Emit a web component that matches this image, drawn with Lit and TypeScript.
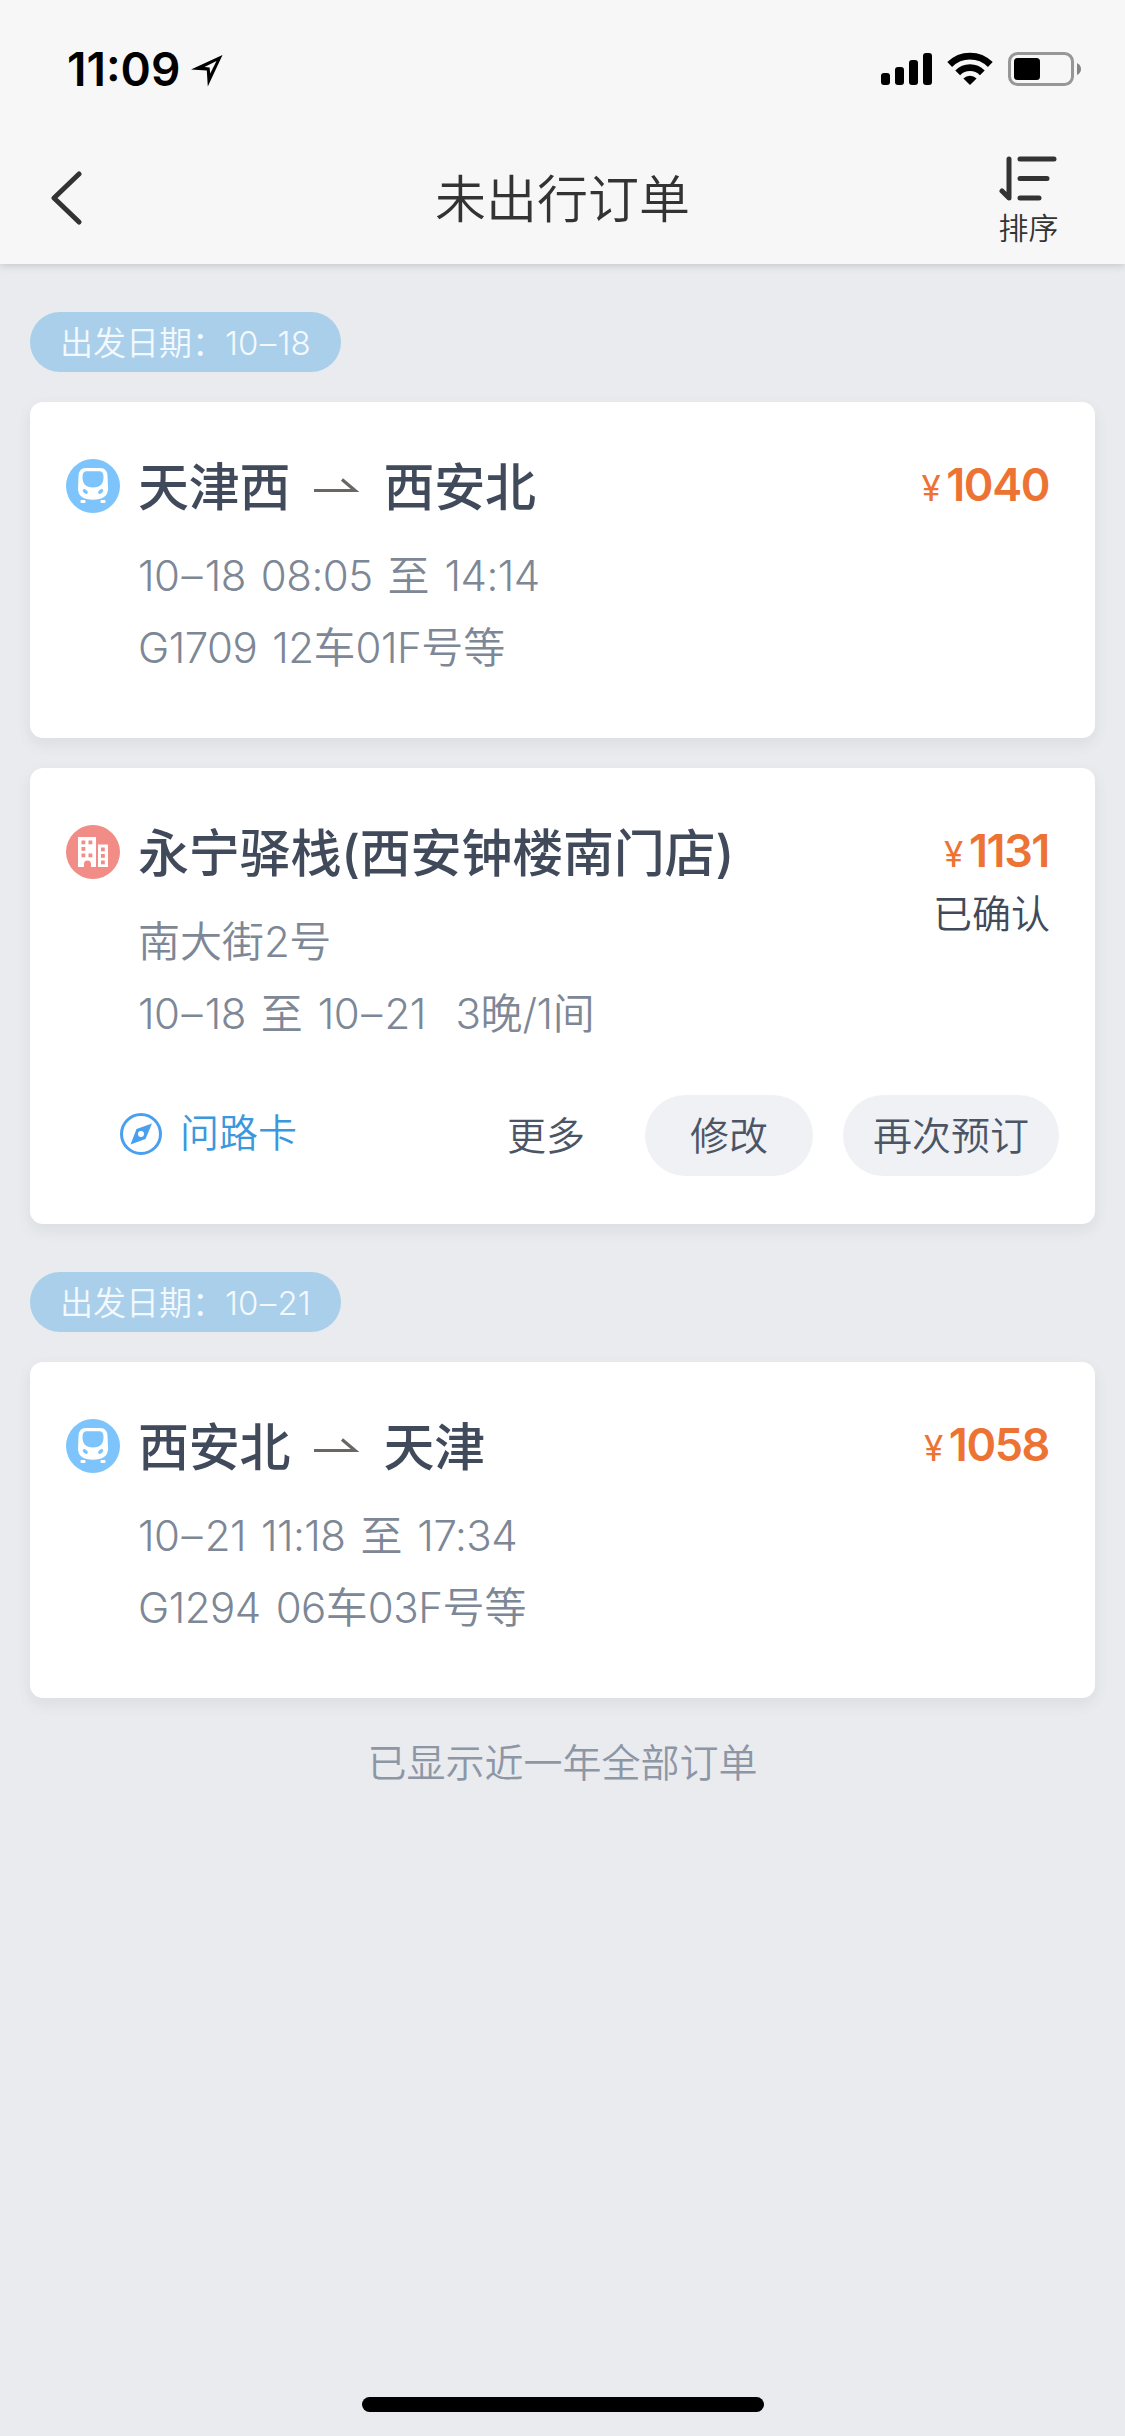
import { LitElement, html, css, svg, nothing } from "lit";
import { customElement, property } from "lit/decorators.js";

interface Order {
  kind: "train" | "hotel";
  title: string;
  to?: string;
  price: string;
  status?: string;
  lines: string[];
  actions?: boolean;
}

const GROUPS: { date: string; orders: Order[] }[] = [
  {
    date: "10–18",
    orders: [
      { kind: "train", title: "天津西", to: "西安北", price: "1040", lines: ["10–18 08:05 至 14:14", "G1709 12车01F号等"] },
      {
        kind: "hotel",
        title: "永宁驿栈(西安钟楼南门店)",
        price: "1131",
        status: "已确认",
        lines: ["南大街2号", "10–18 至 10–21  3晚/1间"],
        actions: true,
      },
    ],
  },
  {
    date: "10–21",
    orders: [
      { kind: "train", title: "西安北", to: "天津", price: "1058", lines: ["10–21 11:18 至 17:34", "G1294 06车03F号等"] },
    ],
  },
];

const fonts = css`Inter, "Noto Sans CJK SC", sans-serif`;

const trainIcon = svg`
  <circle cx="27" cy="27" r="27" fill="#7cc4fb"/>
  <path fill-rule="evenodd" d="M19.500 9h15q6.500 0 7 8l.5 13q0 5-4 8-4 2.800-11 2.800t-11-2.800q-4-3-4-8l.5-13q.5-8 7-8zM20.500 12.200q-3.600 0-4 5-.4 11.300 10.500 11.300t10.500-11.300q-.4-5-4-5z" fill="#fff"/>
  <ellipse cx="19.300" cy="32.500" rx="2.900" ry="1.900" transform="rotate(35 19.300 32.500)" fill="#7cc4fb"/>
  <ellipse cx="34.700" cy="32.500" rx="2.900" ry="1.900" transform="rotate(-35 34.700 32.500)" fill="#7cc4fb"/>
  <rect x="14.500" y="41" width="5" height="3" rx="1" fill="#fff"/>
  <rect x="34.500" y="41" width="5" height="3" rx="1" fill="#fff"/>`;

const hotelIcon = svg`
  <circle cx="27" cy="27" r="27" fill="#f18c86"/>
  <path d="M12 12h18v30h-5v-3a3.500 3.500 0 0 0-7 0v3h-6z" fill="#fff"/>
  <path d="M32 19.500h10V42H32z" fill="#fff"/>
  <g fill="#f18c86">
    <rect x="15.500" y="15.500" width="3.800" height="3.800"/><rect x="22.500" y="15.500" width="3.800" height="3.800"/>
    <rect x="15.500" y="22" width="3.800" height="3.800"/>
    <rect x="15.500" y="28.500" width="3.800" height="3.800"/><rect x="22.500" y="28.500" width="3.800" height="3.800"/>
    <rect x="35" y="22.500" width="3.800" height="3.800"/><rect x="35" y="29" width="3.800" height="3.800"/><rect x="35" y="35.500" width="3.800" height="3.800"/>
  </g>`;

/** Splits a line into Latin, dash and Chinese runs so that each gets its own tracking. */
const runs = (text: string) =>
  (text.match(/–|[\u3000-\uffff]+|[^–\u3000-\uffff]+/g) ?? []).map(
    (t) => html`<span class=${t === "–" ? "dash" : t.charCodeAt(0) >= 0x3000 ? "han" : "num"}>${t}</span>`
  );

@customElement("status-bar")
export class StatusBar extends LitElement {
  static styles = css`
    :host { display: flex; justify-content: space-between; align-items: center; height: 132px; box-sizing: border-box; padding: 5px 43px 0 67px; font-family: ${fonts}; color: #000; }
    .left { display: flex; align-items: center; gap: 11px; }
    .time { font-size: 46px; line-height: 54px; font-weight: 600; }
    .loc { margin-top: 5px; }
    .right { display: flex; align-items: center; }
    svg { display: block; }
  `;
  render() {
    return html`
      <div class="left">
        <span class="time">11:09</span>
        <svg class="loc" width="32" height="34" viewBox="0 0 32 34"><path fill-rule="evenodd" d="M31.500 1 0 15.500l15.800 1L16.800 32.500zM25.500 7 19.200 19.500 18.600 13.500 13.500 13z"/></svg>
      </div>
      <div class="right">
        <svg width="202" height="36" viewBox="880 51 202 36">
          <rect x="881" y="73" width="9" height="12" rx="3"/>
          <rect x="895" y="67" width="9" height="18" rx="3"/>
          <rect x="909" y="60" width="9" height="25" rx="3"/>
          <rect x="923" y="53" width="9" height="32" rx="3"/>
          <path d="M970 85l-6.600-6.600a9.400 9.400 0 0 1 13.200 0z"/>
          <g fill="none" stroke="#000" stroke-width="6.800">
            <path d="M957.700 72.800a17.400 17.400 0 0 1 24.600 0"/>
            <path d="M949.700 64.500a28.700 28.700 0 0 1 40.600 0"/>
          </g>
          <rect x="1009.500" y="53.500" width="63" height="31" rx="8" fill="none" stroke="#979797" stroke-width="3"/>
          <rect x="1014" y="58" width="26" height="22" rx="3.500"/>
          <path d="M1077 63q4 2 4 6t-4 6z" fill="#858585"/>
        </svg>
      </div>`;
  }
}

@customElement("nav-bar")
export class NavBar extends LitElement {
  static styles = css`
    :host { display: grid; grid-template-columns: 1fr auto 1fr; align-items: center; height: 132px; font-family: ${fonts}; color: #333; }
    svg { display: block; fill: none; stroke: #333; stroke-width: 5; stroke-linecap: round; stroke-linejoin: round; }
    .back { padding-left: 50px; }
    .title { font-size: 51px; line-height: 66px; padding-top: 4px; font-weight: 350; }
    .sort { justify-self: end; display: flex; flex-direction: column; align-items: center; padding-right: 66px; padding-top: 6px; }
    .label { font-size: 30px; line-height: 36px; margin-top: 8px; font-weight: 350; }
  `;
  render() {
    return html`
      <div class="back"><svg width="33" height="54" viewBox="0 0 33 54"><path d="M29 3 4 27l25 24"/></svg></div>
      <div class="title">未出行订单</div>
      <div class="sort">
        <svg width="61" height="46" viewBox="0 0 61 46"><path d="M11 3v39L4 35M22 3h34M22 22.500h27M22 42h19"/></svg>
        <span class="label">排序</span>
      </div>`;
  }
}

@customElement("order-card")
export class OrderCard extends LitElement {
  @property({ attribute: false }) order!: Order;
  static styles = css`
    :host { display: block; box-sizing: border-box; min-height: 336px; background: #fff; border-radius: 13px; box-shadow: 0 6px 14px rgba(90, 105, 120, 0.1); padding: 48px 45px 48px 36px; font-family: ${fonts}; }
    svg { display: block; flex: none; }
    .top { display: flex; align-items: flex-start; }
    .icon { margin-top: 9px; }
    .body { flex: 1; padding: 2px 0 0 18px; }
    .title { display: flex; align-items: center; height: 72px; font-size: 51px; line-height: 72px; font-weight: 500; letter-spacing: -0.2px; color: #414a5a; white-space: nowrap; }
    .arrow { margin: 0 23px 8px 22px; }
    .line { height: 72px; line-height: 72px; font-size: 42px; color: #7d8796; white-space: pre; font-weight: 350; word-spacing: 3.6px; }
    .lines { padding-top: 16px; }
    .num { letter-spacing: -0.5px; }
    .dash { margin: 0 0.05em; }
    .side { display: flex; flex-direction: column; align-items: flex-end; }
    .price { display: flex; align-items: baseline; height: 71px; line-height: 70px; color: #ed7334; font-size: 45px; font-weight: 600; letter-spacing: -1.4px; padding-right: 1px; }
    .yen { font-size: 35px; font-weight: 400; margin-right: 7px; }
    .status { font-size: 39px; line-height: 48px; color: #414a5a; font-weight: 350; margin-top: 3px; }
    .actions { display: flex; align-items: center; height: 81px; margin-top: 45px; padding-left: 54px; margin-right: -9px; font-size: 39px; line-height: 81px; font-weight: 350; color: #4c5565; }
    .guide { display: flex; align-items: center; gap: 18px; color: #3b98dd; margin: -4px auto 0 0; }
    .guide-text { margin-top: -3px; }
    .more { margin-right: 60px; }
    .btn { height: 81px; border-radius: 41px; background: #eff1f5; text-align: center; width: 168px; }
    .wide { width: 216px; margin-left: 30px; }
  `;
  render() {
    const o = this.order;
    return html`
      <div class="top">
        <svg class="icon" width="54" height="54" viewBox="0 0 54 54">${o.kind === "train" ? trainIcon : hotelIcon}</svg>
        <div class="body">
          <div class="title">
            <span>${o.title}</span>
            ${o.to
              ? html`<svg class="arrow" width="48" height="18" viewBox="0 0 48 18"><path d="M2 15.500h41L30 4.500" fill="none" stroke="#6b6662" stroke-width="3.200"/></svg><span>${o.to}</span>`
              : nothing}
          </div>
          <div class="lines">${o.lines.map((l) => html`<div class="line">${runs(l)}</div>`)}</div>
        </div>
        <div class="side">
          <div class="price"><span class="yen">¥</span>${o.price}</div>
          ${o.status ? html`<div class="status">${o.status}</div>` : nothing}
        </div>
      </div>
      ${o.actions
        ? html`<div class="actions">
            <div class="guide">
              <svg width="42" height="42" viewBox="0 0 42 42">
                <circle cx="21" cy="21" r="19.500" fill="none" stroke="#4a9fee" stroke-width="3"/>
                <path fill="#4a9fee" fill-rule="evenodd" d="M32 10.500 25.500 26 10.500 31.500 16.500 16zM21 18a3 3 0 1 0 0 6 3 3 0 0 0 0-6z"/>
              </svg>
              <span class="guide-text">问路卡</span>
            </div>
            <span class="more">更多</span>
            <div class="btn">修改</div>
            <div class="btn wide">再次预订</div>
          </div>`
        : nothing}`;
  }
}

@customElement("app-root")
export class AppRoot extends LitElement {
  static styles = css`
    :host { display: flex; flex-direction: column; box-sizing: border-box; width: 1125px; height: 2436px; background: #e9ebee; font-family: ${fonts}; overflow: hidden; }
    .header { background: #f7f7f7; height: 264px; box-shadow: 0 1px 8px rgba(60, 70, 75, 0.24); }
    .list { flex: 1; display: flex; flex-direction: column; gap: 30px; padding: 48px 30px 0; }
    .date { align-self: flex-start; box-sizing: border-box; width: 311px; height: 60px; line-height: 60px; padding: 1px 0 0 30px; border-radius: 30px; background: #aacfea; color: #f3f9fd; font-size: 33px; font-weight: 350; white-space: nowrap; }
    .date.next { margin-top: 18px; }
    .dash { margin: 0 0.04em; }
    .end { text-align: center; font-size: 39px; line-height: 48px; color: #8d96a5; font-weight: 350; margin-top: 11px; }
    .home { align-self: center; width: 402px; height: 15px; border-radius: 8px; background: #000; margin-bottom: 24px; }
  `;
  render() {
    return html`
      <div class="header"><status-bar></status-bar><nav-bar></nav-bar></div>
      <div class="list">
        ${GROUPS.map(
          (g, i) => html`
            <div class="date ${i ? "next" : ""}">${runs("出发日期：" + g.date)}</div>
            ${g.orders.map((o) => html`<order-card .order=${o}></order-card>`)}`
        )}
        <div class="end">已显示近一年全部订单</div>
      </div>
      <div class="home"></div>`;
  }
}
